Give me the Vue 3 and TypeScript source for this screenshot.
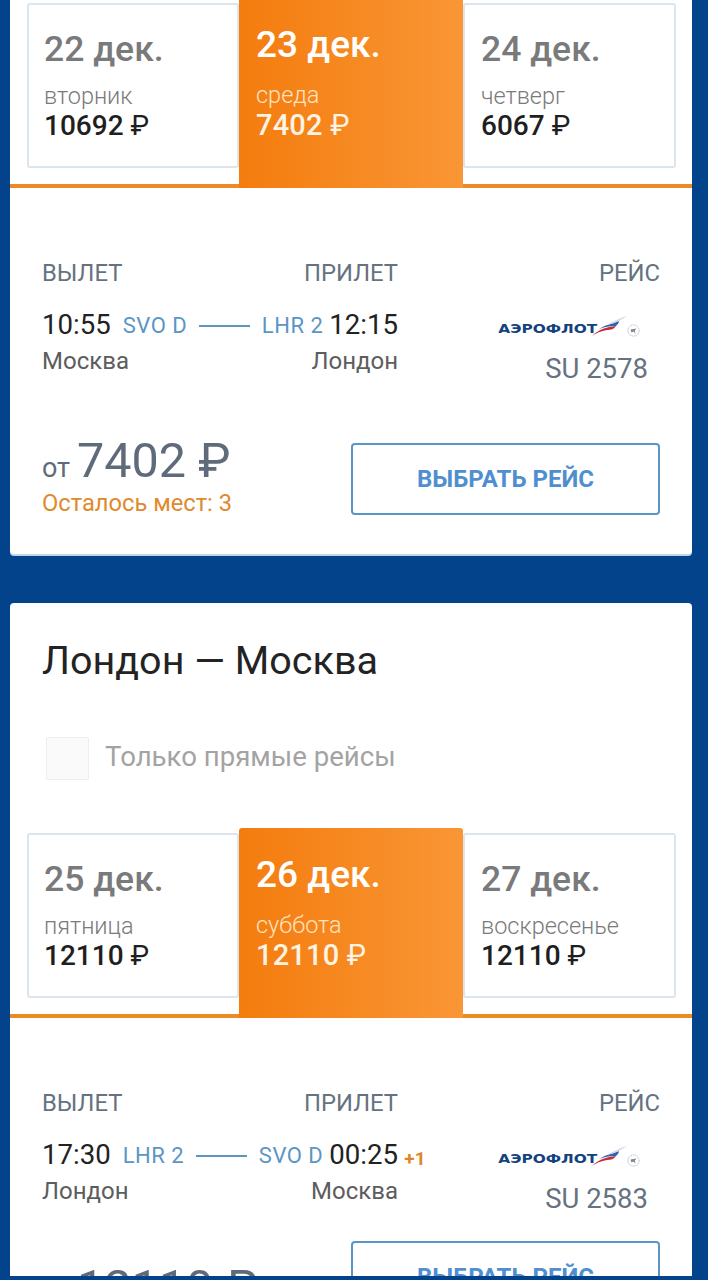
<script setup lang="ts">
interface Day { date: string; weekday: string; price: string; active?: boolean }
interface Flight {
  days: Day[]; dep: string; depCode: string; arrCode: string; arr: string;
  from: string; to: string; num: string; price: string; seats?: string; plus?: string;
}
const flights: Flight[] = [
  {
    days: [
      { date: '22 дек.', weekday: 'вторник', price: '10692' },
      { date: '23 дек.', weekday: 'среда', price: '7402', active: true },
      { date: '24 дек.', weekday: 'четверг', price: '6067' },
    ],
    dep: '10:55', depCode: 'SVO D', arrCode: 'LHR 2', arr: '12:15', from: 'Москва', to: 'Лондон',
    num: 'SU 2578', price: '7402 ₽', seats: 'Осталось мест: 3',
  },
  {
    days: [
      { date: '25 дек.', weekday: 'пятница', price: '12110' },
      { date: '26 дек.', weekday: 'суббота', price: '12110', active: true },
      { date: '27 дек.', weekday: 'воскресенье', price: '12110' },
    ],
    dep: '17:30', depCode: 'LHR 2', arrCode: 'SVO D', arr: '00:25', from: 'Лондон', to: 'Москва',
    num: 'SU 2583', price: '12110 ₽', plus: '+1',
  },
]
</script>

<template>
  <div class="page">
    <div class="viewport">
      <section v-for="(f, i) in flights" :key="f.num" class="card" :class="{ first: i === 0, second: i === 1 }">
        <template v-if="i === 1">
          <h2 class="title">Лондон — Москва</h2>
          <label class="direct"><span class="box"></span><span class="direct-text">Только прямые рейсы</span></label>
        </template>
        <div class="tabs">
          <div v-for="d in f.days" :key="d.date" class="tab" :class="{ active: d.active }">
            <div class="date">{{ d.date }}</div>
            <div class="weekday">{{ d.weekday }}</div>
            <div class="tprice">{{ d.price }} <span class="rub">₽</span></div>
          </div>
        </div>
        <div class="body">
          <div class="route">
            <div class="heads"><span>ВЫЛЕТ</span><span>ПРИЛЕТ</span></div>
            <div class="times">
              <span class="time">{{ f.dep }}</span>
              <span class="code c1">{{ f.depCode }}</span>
              <span class="line"></span>
              <span class="code c2">{{ f.arrCode }}</span>
              <span class="time arr">{{ f.arr }}<span v-if="f.plus" class="plus">{{ f.plus }}</span></span>
            </div>
            <div class="cities"><span>{{ f.from }}</span><span>{{ f.to }}</span></div>
          </div>
          <div class="carrier">
            <div class="chead">РЕЙС</div>
            <div class="logo">
              <span class="logo-text">АЭРОФЛОТ</span>
              <svg class="swoosh" width="36" height="22" viewBox="0 0 36 22">
                <path d="M0 21 C7 14 15 12 24 11 C22 14 19 15 15 15 C9 16 4 18 0 21 Z" fill="#c62a3c" />
                <path d="M7 14 C13 10 19 9 27 6 C27 8 25 10 24 11 C17 11 12 12 7 14 Z" fill="#3560ad" />
                <path d="M15 10 C20 7 27 3 35 1 C33 3 30 4 27 6 C23 8 19 9 15 10 Z" fill="#d8dde8" />
              </svg>
              <svg class="emblem" width="13" height="13" viewBox="0 0 13 13">
                <circle cx="6.5" cy="6.5" r="5.6" fill="none" stroke="#a9afb6" stroke-width="0.8" stroke-dasharray="1.4 0.7" />
                <path d="M3.5 5.5 L9.5 4.5 L7.8 6.5 L8.5 9.5 L6.5 7.5 L4.5 8.5 Z" fill="#7e868f" />
              </svg>
            </div>
            <div class="num">{{ f.num }}</div>
          </div>
        </div>
        <div class="foot">
          <div class="price-box">
            <div class="price" :class="{ solo: !f.seats }"><span class="from">от</span> <span class="amount">{{ f.price }}</span></div>
            <div v-if="f.seats" class="seats">{{ f.seats }}</div>
          </div>
          <button class="choose" type="button">ВЫБРАТЬ РЕЙС</button>
        </div>
      </section>
    </div>
  </div>
</template>

<style>
html, body { margin: 0; background: #02438c; }
</style>

<style scoped>
.page {
  width: 708px; height: 1280px; overflow: hidden; background: #02438c;
  font-family: Roboto, "Noto Sans", sans-serif;
}
.viewport { height: 1276px; overflow: hidden; padding: 0 16px 0 10px; }
.card {
  background: #fff; border-radius: 4px; box-shadow: 0 2px 0 #c5d3e2;
}
.first { border-radius: 0 0 4px 4px; height: 554px; }
.second { margin-top: 49px; }
.second .foot { padding-top: 26px; }
.title { margin: 0; padding: 35px 32px 0; font-size: 39.5px; line-height: 46px; font-weight: 400; color: #232323; }
.direct { display: flex; align-items: center; padding: 53px 36px 0; height: 43px; gap: 17px; }
.box { width: 41px; height: 41px; border: 1px solid #eceef0; background: #fafafa; border-radius: 2px; }
.direct-text { font-size: 27.6px; line-height: 38px; color: #a3a3a3; margin-bottom: 3px; margin-left: -1px; }
.second .tabs { margin-top: 50px; }
.tabs {
  display: flex; padding: 3px 15px 0 17px; height: 188px; box-sizing: border-box;
  border-bottom: 4px solid #ec8a25;
}
.tab {
  flex: 0 0 212px; height: 165px; box-sizing: border-box; background: #fff;
  border: 2px solid #dce4ee; border-radius: 3px; padding: 22px 0 0 15px; color: #7a7a7a;
}
.tab:last-child { flex-basis: 213px; padding-left: 16px; }
.tab.active {
  flex: 0 0 224px; height: 190px; margin-top: -5px; border: 0; border-radius: 3px 3px 0 0;
  background: linear-gradient(90deg, #f47c0e, #f99635); color: #fff; padding: 25px 0 0 17px;
}
.date { font-size: 35.5px; line-height: 44px; font-weight: 500; }
.active .date { font-size: 37px; }
.weekday { font-size: 23.5px; line-height: 27px; margin-top: 12px; font-weight: 300; }
.active .weekday { color: #ffe3c2; margin-top: 15px; }
.tprice { font-size: 28px; line-height: 32px; color: #1f1f1f; font-weight: 500; }
.active .tprice { color: #fff3e3; font-size: 29px; letter-spacing: 0.2px; }
.rub { font-weight: 400; }
.body { display: flex; padding: 71px 32px 0 32px; justify-content: space-between; }
.route { width: 356px; }
.heads, .cities { display: flex; justify-content: space-between; }
.heads, .chead { font-size: 23.8px; line-height: 28px; color: #66727f; }
.times { display: flex; align-items: center; margin-top: 21px; height: 34px; }
.time { font-size: 27.6px; color: #222; line-height: 34px; }
.arr { position: relative; margin-left: 6px; }
.plus { position: absolute; left: 75px; top: 9px; font-size: 19px; font-weight: 700; color: #e0862a; line-height: 24px; }
.code { font-size: 22px; color: #5b95c6; letter-spacing: 0.5px; }
.c1 { margin-left: 12px; }
.line { flex: 1; height: 2px; background: #5d97c1; margin: 2px 12px 0; }
.cities { margin-top: 4px; font-size: 24px; line-height: 30px; color: #5d5d5d; }
.carrier { text-align: right; }
.logo { display: flex; align-items: center; height: 30px; margin-top: 26px; margin-right: 20px; justify-content: flex-end; }
.logo-text {
  font-family: "DejaVu Sans", sans-serif; font-weight: 700; font-size: 12px; color: #13427f;
  transform: scaleX(1.28); transform-origin: right center; margin-right: 1px; margin-top: 2px;
}
.swoosh { margin-left: -6px; margin-bottom: 4px; }
.emblem { margin-left: -1px; margin-top: 4px; }
.num { font-size: 27.5px; line-height: 32px; color: #66727f; margin-top: 10px; margin-right: 12px; }
.foot { display: flex; justify-content: space-between; padding: 58px 32px 0; }
.price { line-height: 50px; color: #5f6b7a; white-space: nowrap; margin-top: -7px; }
.price.solo { margin-top: 22px; }
.from { font-size: 27px; color: #5f6b7a; }
.amount { font-size: 48.5px; margin-left: 3px; }
.seats { font-size: 23.7px; line-height: 30px; color: #e08a2e; margin-top: -9px; }
.choose {
  width: 309px; height: 72px; box-sizing: border-box; background: #fff;
  border: 2px solid #5b95c6; border-radius: 4px; font-family: inherit;
  font-size: 24px; font-weight: 700; color: #4f8fd0; padding: 0;
}
</style>
